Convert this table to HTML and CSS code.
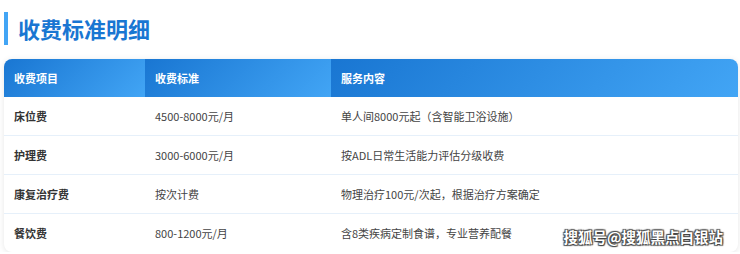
FILE: index.html
```html
<!DOCTYPE html>
<html lang="zh">
<head>
<meta charset="utf-8">
<link rel="stylesheet" href="styles.css">
</head>
<body>
<div class="page">
  <h1 class="title">收费标准明细</h1>
  <div class="card">
    <table class="fees">
      <colgroup>
        <col class="c1"><col class="c2"><col class="c3">
      </colgroup>
      <thead>
        <tr><th>收费项目</th><th>收费标准</th><th>服务内容</th></tr>
      </thead>
      <tbody>
        <tr><td class="name">床位费</td><td>4500-8000元/月</td><td>单人间8000元起（含智能卫浴设施）</td></tr>
        <tr><td class="name">护理费</td><td>3000-6000元/月</td><td>按ADL日常生活能力评估分级收费</td></tr>
        <tr><td class="name">康复治疗费</td><td>按次计费</td><td>物理治疗100元/次起，根据治疗方案确定</td></tr>
        <tr><td class="name">餐饮费</td><td>800-1200元/月</td><td>含8类疾病定制食谱，专业营养配餐</td></tr>
      </tbody>
    </table>
    <div class="watermark">搜狐号@搜狐黑点白银站</div>
  </div>
</div>
</body>
</html>
```

FILE: styles.css
```css
html, body {
  margin: 0;
  padding: 0;
  background: #ffffff;
}
body {
  font-family: "Noto Sans CJK SC", "Noto Sans", sans-serif;
}
.page {
  padding: 12px 2px 0 4px;
}
.title {
  margin: 0;
  border-left: 4px solid #42a5f5;
  padding-left: 10px;
  font-size: 22px;
  line-height: 33px;
  font-weight: 700;
  color: #1976d2;
}
.card {
  position: relative;
  margin-top: 14px;
  width: 734px;
  border-radius: 8px;
  overflow: hidden;
  background: #fff;
  box-shadow: 0 1px 6px rgba(0, 0, 0, 0.10);
}
.fees {
  width: 100%;
  border-collapse: separate;
  border-spacing: 0;
  table-layout: fixed;
  font-size: 11px;
}
.c1 { width: 141px; }
.c2 { width: 186px; }
.fees th {
  height: 38px;
  padding: 0 10px;
  text-align: left;
  font-weight: 700;
  color: #ffffff;
  background: linear-gradient(135deg, #1976d2, #42a5f5);
}
.fees td {
  height: 38px;
  padding: 0 10px;
  line-height: 16px;
  color: #444;
  border-bottom: 1px solid #e6f0fa;
}
.fees tr:last-child td {
  border-bottom: none;
}
.fees td.name {
  font-weight: 700;
  color: #333;
}
.watermark {
  position: absolute;
  right: 15px;
  bottom: 6px;
  font-size: 14.5px;
  line-height: 18px;
  font-weight: 700;
  color: #ffffff;
  letter-spacing: 0;
  text-shadow: 0 0 1px #333, 1px 1px 1px #444, -1px -1px 1px #555, 1px -1px 1px #555, -1px 1px 1px #555;
}
```
